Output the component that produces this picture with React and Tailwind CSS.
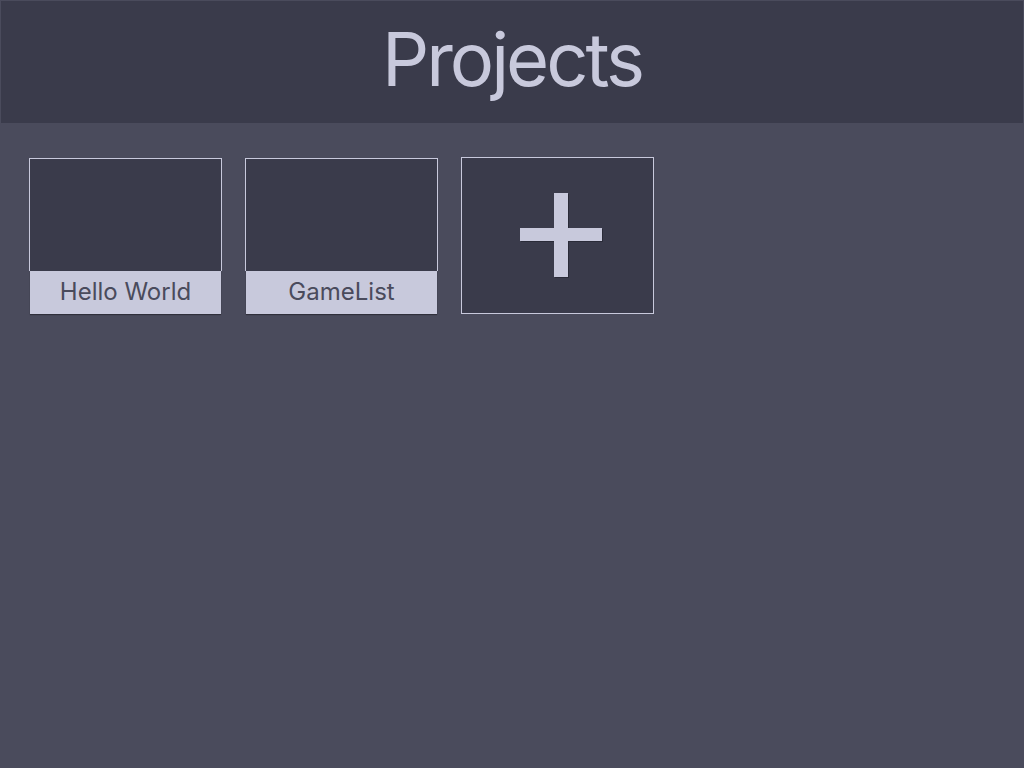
import React from 'react';

const projects = ['Hello World', 'GameList'];

const ProjectCard = ({ name }) => (
  <div className="w-[193px] h-[156px] flex flex-col">
    <div className="h-[113px] bg-[#3a3b4b] border border-b-0 border-[#c8c9dc]" />
    <div className="h-[43px] mx-px pb-[2px] bg-[#c8c9dc] text-[#4a4b5c] text-[24px] flex items-center justify-center shadow-[0_1px_1px_rgba(0,0,0,0.35)]">
      {name}
    </div>
  </div>
);

const AddCard = () => (
  <div className="w-[193px] h-[157px] -mt-px bg-[#3a3b4b] border border-[#c8c9dc] flex items-center justify-center">
    <svg className="ml-[8px]" width="84" height="86" viewBox="0 0 84 86">
      <rect x="35" y="1" width="14" height="84" fill="#2a2b38" />
      <rect x="1" y="36" width="82" height="13" fill="#2a2b38" />
      <rect x="34" y="0" width="14" height="84" fill="#c8c9dc" />
      <rect x="0" y="35" width="82" height="13" fill="#c8c9dc" />
    </svg>
  </div>
);

export default function App() {
  return (
    <div className="w-[1024px] h-[768px] bg-[#4a4b5c] font-['Inter',sans-serif] overflow-hidden">
      <header className="h-[123px] bg-[#3a3b4b] border border-b-0 border-[#4a4b5c] flex items-center justify-center">
        <h1 className="text-[74px] text-[#c8c9dc] tracking-[-3px] leading-none -mt-[6px]">Projects</h1>
      </header>
      <div className="flex gap-[23px] pl-[29px] pt-[35px]">
        {projects.map((p) => (
          <ProjectCard key={p} name={p} />
        ))}
        <AddCard />
      </div>
    </div>
  );
}
